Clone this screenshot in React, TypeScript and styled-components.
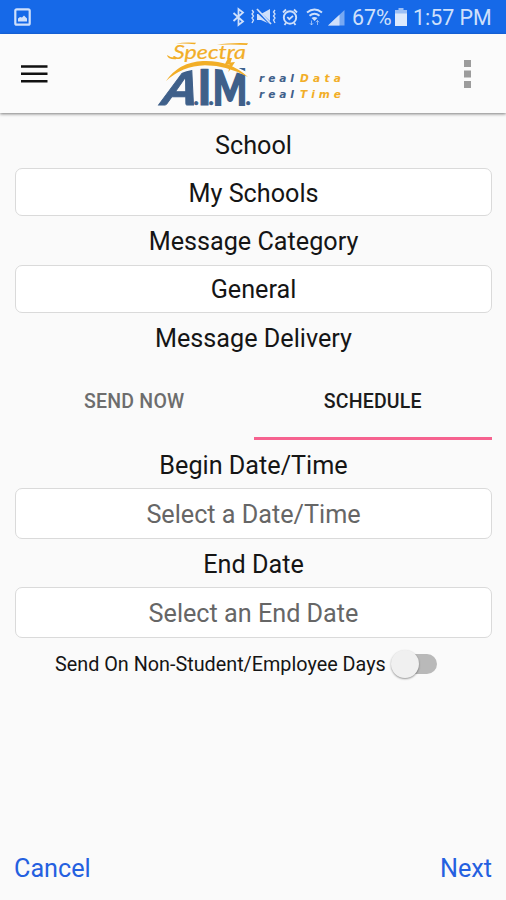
import React from "react";
import styled, { createGlobalStyle } from "styled-components";

const GlobalStyle = createGlobalStyle`
  * { box-sizing: border-box; }
  body { margin: 0; background: #fafafa; font-family: Roboto, sans-serif; }
  button { font: inherit; border: 0; background: none; padding: 0; cursor: pointer; }
`;

const Screen = styled.div`
  width: 506px;
  height: 900px;
  display: flex;
  flex-direction: column;
  background: #fafafa;
  color: #151515;
  overflow: hidden;
`;

const StatusBar = styled.div`
  height: 34px;
  flex: none;
  display: flex;
  align-items: center;
  justify-content: space-between;
  padding: 0 14px;
  background: #1669e8;
  color: #cfe0fb;
`;

const StatusIcons = styled.div`
  display: flex;
  align-items: center;
  svg { display: block; flex: none; }
`;

const StatusText = styled.span<{ $width: number; $gap: number }>`
  width: ${(p) => p.$width}px;
  margin-left: ${(p) => p.$gap}px;
  font-size: 21.4px;
  line-height: 34px;
  padding-top: 2px;
  white-space: nowrap;
`;

const Header = styled.header`
  height: 79px;
  flex: none;
  display: flex;
  align-items: center;
  justify-content: space-between;
  padding: 0 35px 0 21px;
  background: #fbfbfb;
  box-shadow: 0 1px 3px rgba(0, 0, 0, 0.5);
`;

const LogoDrawing = styled.svg`
  overflow: visible;
  margin-right: 11px;
`;

const IconButton = styled.button`
  display: flex;
  color: #111;
`;

const Form = styled.main`
  flex: 1;
  display: flex;
  flex-direction: column;
  padding: 7px 14px 0 15px;
`;

const Label = styled.div<{ $height: number }>`
  height: ${(p) => p.$height}px;
  display: flex;
  align-items: center;
  justify-content: center;
  padding-top: 2px;
  font-size: 25.2px;
`;

const Field = styled.button<{ $height: number; $placeholder?: boolean }>`
  height: ${(p) => p.$height}px;
  flex: none;
  border: 1.5px solid #dadada;
  border-radius: 7px;
  background: #fff;
  font-size: 25.2px;
  padding-top: 2px;
  color: ${(p) => (p.$placeholder ? "#666" : "#151515")};
`;

const Tabs = styled.div`
  display: flex;
  height: 78px;
  flex: none;
`;

const Tab = styled.button<{ $active?: boolean }>`
  flex: 1;
  padding-top: 4px;
  font-size: 19.5px;
  font-weight: 500;
  letter-spacing: 0.2px;
  color: ${(p) => (p.$active ? "#1b1b1b" : "#6d6d6d")};
  border-bottom: 3.5px solid ${(p) => (p.$active ? "#f6628f" : "transparent")};
`;

const SwitchRow = styled.div`
  display: flex;
  align-items: center;
  height: 52px;
  padding-left: 40px;
  font-size: 19.8px;
`;

const Track = styled.span`
  width: 43px;
  height: 20px;
  margin-left: 8px;
  border-radius: 10px;
  background: #b9b9b9;
  display: flex;
  align-items: center;
`;

const Thumb = styled.span`
  width: 28px;
  height: 28px;
  flex: none;
  margin-left: -3px;
  border-radius: 50%;
  background: #f0f0f0;
  box-shadow: 0 1px 2px rgba(0, 0, 0, 0.4);
`;

const Footer = styled.footer`
  height: 66px;
  flex: none;
  display: flex;
  justify-content: space-between;
  align-items: center;
  padding: 3px 14px 0;
`;

const TextButton = styled.button`
  color: #2460e0;
  font-size: 25.2px;
`;

const PictureIcon = () => (
  <svg width="17" height="18" viewBox="0 0 17 18">
    <rect x="1.3" y="1.3" width="14.4" height="15.4" rx="1.5" fill="none" stroke="#cfe0fb" strokeWidth="2.2" />
    <path d="M4 13.5v-3l2-1.5 2 .5 2-2 3 3v3z" fill="#cfe0fb" />
  </svg>
);

const SystemIcons = () => (
  <svg width="116" height="22" viewBox="231 6 116 22" fill="none" stroke="#cfe0fb" strokeWidth="1.8">
    <path d="M233.5 13l9.5 8.5-4.5 3.5v-16l4.5 3.5-9.5 8.5" />
    <path d="M252 10l1.5 2-1.5 2 1.5 2-1.5 2 1.5 2-1.5 3M275 10l-1.5 2 1.5 2-1.5 2 1.5 2-1.5 2 1.5 3" strokeWidth="1.3" />
    <path d="M257 14h4l9-5v15l-9-4h-4z" fill="#cfe0fb" stroke="none" />
    <path d="M256 10l15 14" stroke="#1669e8" strokeWidth="3" />
    <path d="M257 9l14 15" />
    <circle cx="290" cy="17.5" r="6.2" strokeWidth="1.9" />
    <path d="M283 12.5l3-3M297 12.5l-3-3M286 23l-1.5 2M294 23l1.5 2M287.3 17l2 2.2 3.7-3.4" />
    <path d="M307 12.5q7.5-6 15 0M309.5 15.8q5-4.2 10 0" strokeWidth="2" />
    <path d="M311.5 18q3-2 6 0l-3 3z" fill="#cfe0fb" stroke="none" />
    <path d="M311.5 20.5v4.5m-1.6-1.8l1.6 1.8 1.6-1.8M317.5 25v-4.5m-1.6 1.8l1.6-1.8 1.6 1.8" strokeWidth="1" opacity=".65" />
    <path d="M328 25.5l16.5-15.5v15.5z" fill="#77a8f2" stroke="none" />
    <path d="M328 25.5l11.5-10.8v10.8z" fill="#cfe0fb" stroke="none" />
  </svg>
);

const BatteryIcon = () => (
  <svg width="12" height="18" viewBox="0 0 12 18">
    <path d="M3.5 0h5v2H12v4H0V2h3.5z" fill="#9bbff6" />
    <path d="M0 5.5h12V18H0z" fill="#dce9fd" />
  </svg>
);

const MenuIcon = () => (
  <svg width="27" height="20" viewBox="0 0 27 20">
    <path d="M0 2.4h26.5M0 9.8h26.5M0 17.2h26.5" stroke="#111" strokeWidth="2.5" />
  </svg>
);

const MoreIcon = () => (
  <svg width="7" height="28" viewBox="0 0 7 28" fill="#9c9c9c">
    <rect width="7" height="7" />
    <rect y="10.5" width="7" height="7" />
    <rect y="21" width="7" height="7" />
  </svg>
);

const Logo = () => (
  <LogoDrawing width="188" height="79" viewBox="157 34 188 79">
    <g fill="#3f608a" stroke="#3f608a" fontFamily="Lato, sans-serif" fontWeight="900">
      <text transform="translate(159 104.5) skewX(-19)" fontSize="48" strokeWidth="1" textLength="34" lengthAdjust="spacingAndGlyphs">A</text>
      <text x="197.5" y="104.5" fontSize="49" strokeWidth="1" textLength="14" lengthAdjust="spacingAndGlyphs">I</text>
      <text x="213" y="104.5" fontSize="49" strokeWidth="2" textLength="34" lengthAdjust="spacingAndGlyphs">M</text>
      <g fontSize="22" strokeWidth=".5">
        <text x="193.5" y="104.5">.</text>
        <text x="208.5" y="104.5">.</text>
        <text x="245.5" y="104.5">.</text>
      </g>
    </g>
    <path d="M163 84Q175 62 201 60.5Q223 59 252 76Q227 67 203 67.5Q179 68.5 163 84z" fill="#fbfbfb" stroke="#fbfbfb" strokeWidth="2" />
    <g fill="#f2ae27" fontStyle="italic" fontFamily="Lato, sans-serif">
      <text x="173" y="58.5" fontSize="19" textLength="73" lengthAdjust="spacingAndGlyphs" stroke="#f2ae27" strokeWidth=".2">Spectra</text>
      <path d="M176 43.8q9-2.2 20-1l-1 1.5q-10-1.2-19-.5zM217 44.8q12-2.2 31-1.6l-1 1.8q-14-.8-30-.2zM167 55q4 3.2 10 2.5l-1 1.8q-8 .5-9-4.3z" />
      <path d="M228 58l-3.5 7 5-.5-1 7.5 6.5-10-4.5.5 1.5-4.5z" />
      <path d="M166 81Q179 62 203 61Q230 60 248 77Q228 65.5 205 65.2Q182 66 166 81z" />
    </g>
    <g fontFamily="'DejaVu Sans', sans-serif" fontStyle="italic" fontWeight="700" fontSize="10.6">
      <text x="259" y="81.5" fill="#3f608a" textLength="35">real</text>
      <text x="300" y="81.5" fill="#f2ae27" textLength="41">Data</text>
      <text x="259" y="98" fill="#3f608a" textLength="35">real</text>
      <text x="300" y="98" fill="#f2ae27" textLength="41">Time</text>
    </g>
  </LogoDrawing>
);

export default function App() {
  return (
    <>
      <GlobalStyle />
      <Screen>
        <StatusBar>
          <PictureIcon />
          <StatusIcons>
            <SystemIcons />
            <StatusText $width={43} $gap={5}>67%</StatusText>
            <BatteryIcon />
            <StatusText $width={79} $gap={6}>1:57 PM</StatusText>
          </StatusIcons>
        </StatusBar>
        <Header>
          <IconButton aria-label="Menu"><MenuIcon /></IconButton>
          <Logo />
          <IconButton aria-label="More"><MoreIcon /></IconButton>
        </Header>
        <Form>
          <Label $height={48}>School</Label>
          <Field $height={48}>My Schools</Field>
          <Label $height={48.5}>Message Category</Label>
          <Field $height={48}>General</Field>
          <Label $height={49.5}>Message Delivery</Label>
          <Tabs>
            <Tab>SEND NOW</Tab>
            <Tab $active>SCHEDULE</Tab>
          </Tabs>
          <Label $height={48}>Begin Date/Time</Label>
          <Field $height={51} $placeholder>Select a Date/Time</Field>
          <Label $height={48}>End Date</Label>
          <Field $height={51} $placeholder>Select an End Date</Field>
          <SwitchRow>
            Send On Non-Student/Employee Days
            <Track role="switch" aria-checked="false"><Thumb /></Track>
          </SwitchRow>
        </Form>
        <Footer>
          <TextButton>Cancel</TextButton>
          <TextButton>Next</TextButton>
        </Footer>
      </Screen>
    </>
  );
}
